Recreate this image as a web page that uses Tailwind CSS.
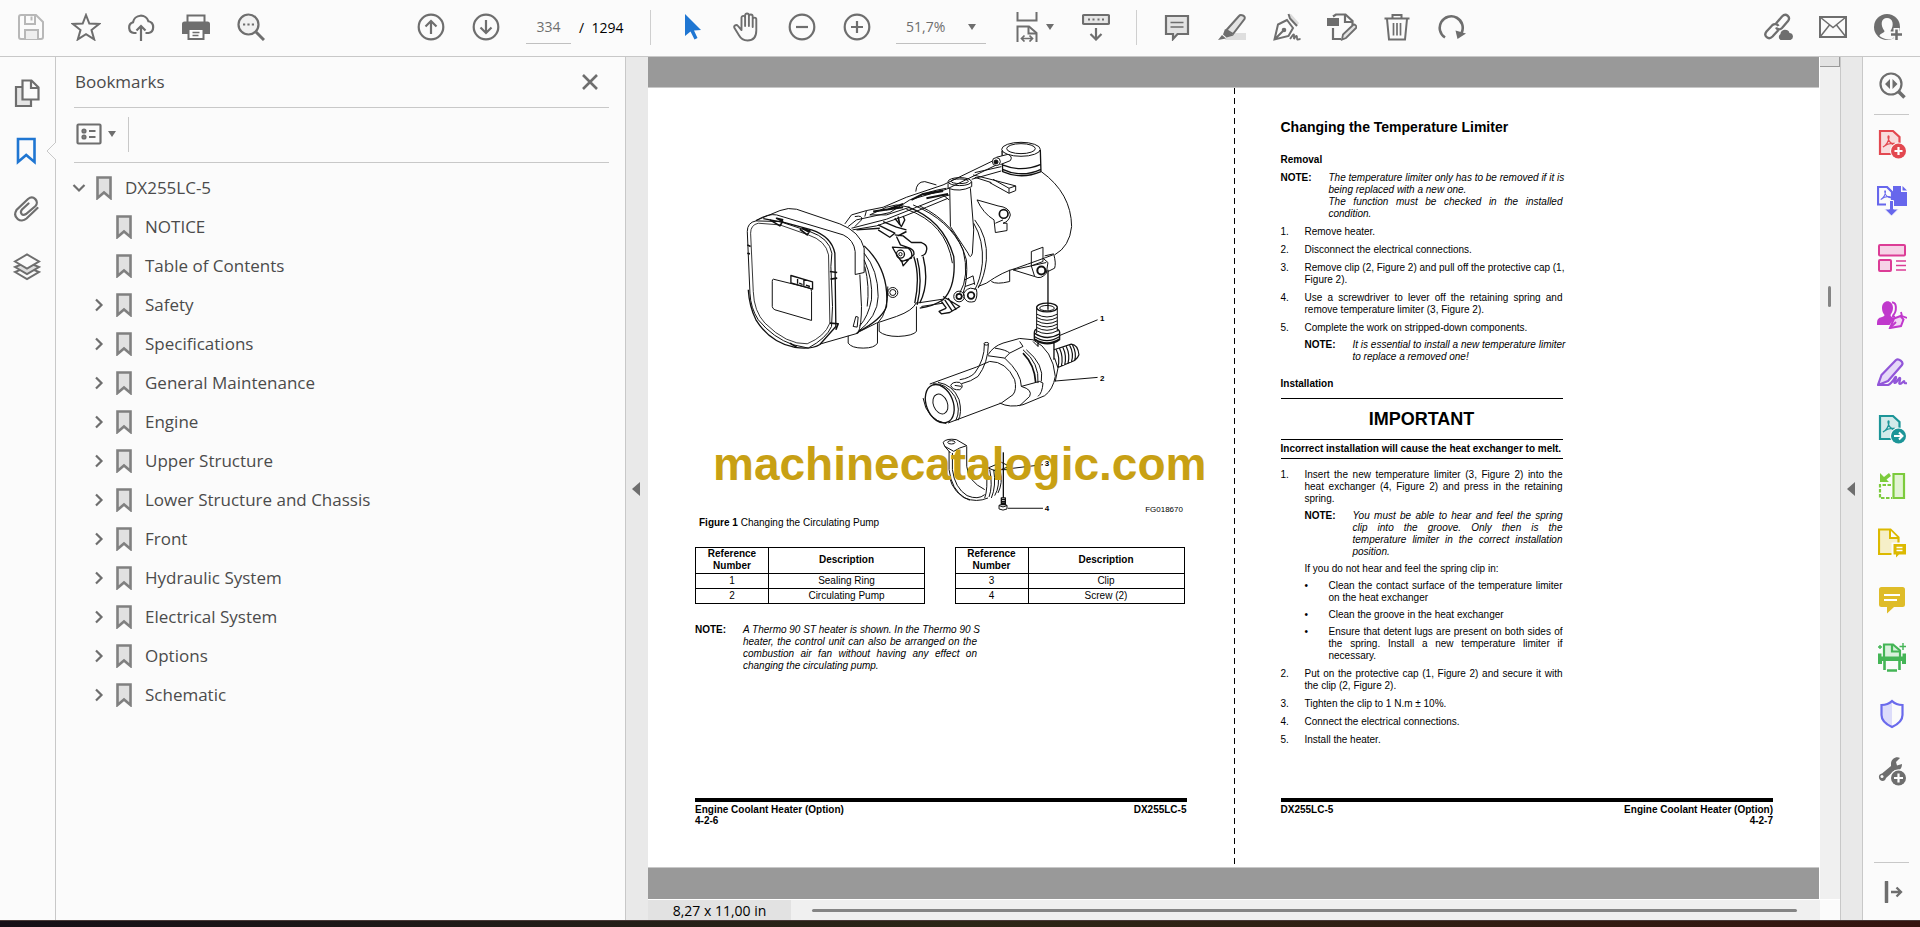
<!DOCTYPE html>
<html lang="en">
<head>
  <meta charset="UTF-8" />
  <meta name="viewport" content="width=device-width, initial-scale=1.0" />
  <title>DX255LC-5 - PDF Reader</title>
  <script src="https://cdn.jsdelivr.net/npm/@tailwindcss/browser@4"></script>
</head>
<body class="h-screen flex flex-col overflow-hidden bg-[#fbfbfb] text-[#4b4b4b] font-['Open_Sans','Noto_Sans',sans-serif]">

  <!-- Shared icons -->
  <svg class="hidden">
    <symbol id="bookmark" viewBox="0 0 16 24"><path d="M1.5 1.5h13v20.5L8 16.5 1.5 22z" fill="#e1e1e1" stroke="#808080" stroke-width="2.6" /></symbol>
    <symbol id="chevron" viewBox="0 0 10 14"><path d="M2 1.5 7.5 7 2 12.5" fill="none" stroke="#6e6e6e" stroke-width="2.2" /></symbol>
    <symbol id="caret" viewBox="0 0 8 6"><path d="M0 0h8L4 6z" fill="#6e6e6e" /></symbol>
    <symbol id="acrobat" viewBox="0 0 14 14"><path d="M1 12c3-1 6-6 6-10 0-1.500-1-1.500-1 0 0 4 4 8 7 8 1 0 1-1.500 0-1.500-4-.5-9 1-12 3.500z" fill="none" stroke="currentColor" stroke-width="1.300" /></symbol>
  </svg>

  <!-- Toolbar -->
  <header class="h-[57px] shrink-0 flex items-center border-b border-[#c8c8c8] pl-[3px] pr-[5px] pb-0.5 text-[#6e6e6e] [&_button]:w-[55px] [&_button]:h-10 [&_button]:flex [&_button]:items-center [&_button]:justify-center">
    <button aria-label="Save">
      <svg class="size-7" viewBox="0 0 28 28" fill="none" stroke="#b8b8b8" stroke-width="2"><path d="M4 2h15l7 7v15a2 2 0 0 1-2 2H4a2 2 0 0 1-2-2V4a2 2 0 0 1 2-2z" /><path d="M8 2v9h10V2" /><path d="M14.500 3.500v4" /><path d="M8 26v-9h13v9" fill="#eee" /></svg>
    </button>
    <button aria-label="Add to favourites">
      <svg class="w-[30px] h-7" viewBox="0 0 30 28" fill="none" stroke="currentColor" stroke-width="2"><path d="m15 2 3.300 8.600 9.700.4-7.500 6 2.700 9.400L15 21.200l-8.200 5.200L9.500 17 2 11l9.700-.4z" /></svg>
    </button>
    <button aria-label="Upload">
      <svg class="size-7" viewBox="0 0 28 28" fill="none" stroke="currentColor" stroke-width="2.200"><path d="M9.500 20H7A5.500 5.500 0 0 1 6 9.300a8 8 0 0 1 15.500-1A6 6 0 0 1 21.500 20h-3" /><path d="M14 28V13M9.500 17.500 14 13l4.500 4.500" /></svg>
    </button>
    <button aria-label="Print">
      <svg class="size-7" viewBox="0 0 28 28" fill="none"><path d="M5.500 9V2.500h17V9" stroke="currentColor" stroke-width="2" /><path d="M2.500 8.500h23A2.500 2.500 0 0 1 28 11v10h-6v-5H6v5H0V11a2.500 2.500 0 0 1 2.500-2.500z" fill="currentColor" /><path d="M6.500 16h15v10h-15z" fill="#fff" stroke="currentColor" stroke-width="2" /><path d="M10.500 19.500h7M10.500 22.500h6" stroke="currentColor" stroke-width="1.500" /></svg>
    </button>
    <button aria-label="Find">
      <svg class="size-7" viewBox="0 0 28 28" fill="none" stroke="currentColor" stroke-width="2.200"><circle cx="11.500" cy="11.500" r="10" fill="#f1f1f1" /><path d="m19 19 8 8" stroke-width="3" /><path d="M6 11.500h2.200M10.400 11.500h2.200M14.800 11.500H17" stroke-width="2.200" /></svg>
    </button>

    <button class="ml-[125px]" aria-label="Previous page">
      <svg class="size-7" viewBox="0 0 28 28" fill="none" stroke="currentColor" stroke-width="2.200"><circle cx="14" cy="14" r="12.300" /><path d="M14 21V8M8.500 13.500 14 8l5.500 5.500" /></svg>
    </button>
    <button aria-label="Next page">
      <svg class="size-7" viewBox="0 0 28 28" fill="none" stroke="currentColor" stroke-width="2.200"><circle cx="14" cy="14" r="12.300" /><path d="M14 7v13M8.500 14.500 14 20l5.500-5.500" /></svg>
    </button>
    <input id="page" aria-label="Page number" value="334" class="ml-[13px] w-[45px] h-[34px] border-b border-[#c0c0c0] text-center text-[14px] outline-none" />
    <label for="page" class="ml-2 w-[58px] text-[14px] text-black whitespace-pre">/  1294</label>
    <span class="ml-[13px] w-px h-[35px] bg-[#cfcfcf]"></span>

    <button class="ml-[13px]" aria-label="Select">
      <svg class="size-7" viewBox="0 0 28 28"><path d="M7 1v22l5.500-4.500 4 8 3-1.500-3.500-7.500 7-.5z" fill="#1f76d2" /></svg>
    </button>
    <button aria-label="Hand">
      <svg class="size-[30px]" viewBox="0 0 30 30" fill="none" stroke="currentColor" stroke-width="1.900" stroke-linejoin="round" stroke-linecap="round"><path d="M9.500 15.500V5.800c0-2.600 3.600-2.600 3.600 0V14 3.500c0-2.600 3.800-2.600 3.800 0V14 4.500c0-2.600 3.800-2.600 3.800 0V15 7.500c0-2.500 3.600-2.500 3.600 0v11c0 6-3 10-8.800 10-4.500 0-6.800-2-8.700-5.500L2.500 16c-1.200-2.400 1.800-4 3.500-2l3.500 4z" /></svg>
    </button>
    <button aria-label="Zoom out">
      <svg class="size-7" viewBox="0 0 28 28" fill="none" stroke="currentColor" stroke-width="2.200"><circle cx="14" cy="14" r="12.300" /><path d="M8 14h12" /></svg>
    </button>
    <button aria-label="Zoom in">
      <svg class="size-7" viewBox="0 0 28 28" fill="none" stroke="currentColor" stroke-width="2.200"><circle cx="14" cy="14" r="12.300" /><path d="M8 14h12M14 8v12" /></svg>
    </button>
    <div class="ml-3 w-[90px] h-[34px] flex items-center border-b border-[#c0c0c0]">
      <select aria-label="Zoom level" class="appearance-none grow h-full pl-2.5 text-[14px] outline-none"><option>51,7%</option></select>
      <svg class="w-2 h-1.5 mr-2.5"><use href="#caret" /></svg>
    </div>
    <button class="ml-[21px] gap-2" aria-label="Fit page">
      <svg class="w-[22px] h-[30px] shrink-0" viewBox="0 0 22 30" fill="none" stroke="currentColor" stroke-width="2"><path d="M1.500 0v8.500h19V0M1.500 30V14.500H13l7.500 6.500v9" /><path d="M12.500 15v6.500h8" /><path d="M6 26.500h10M8.500 23.500l-3 3 3 3M13.500 23.500l3 3-3 3" stroke-width="1.700" /></svg>
      <svg class="w-2 h-1.5 shrink-0"><use href="#caret" /></svg>
    </button>
    <button class="ml-1.5" aria-label="Scroll mode">
      <svg class="size-7" viewBox="0 0 28 28" fill="none" stroke="currentColor" stroke-width="2.200"><rect x="1" y="2" width="26" height="9" rx="1" fill="#e6e6e6" /><path d="M6 6.500h2M10.500 6.500h2M15.500 6.500h2M20 6.500h2" /><path d="M14 15v11M8.500 21l5.500 5.500 5.500-5.500" /></svg>
    </button>
    <span class="ml-[13px] w-px h-[35px] bg-[#cfcfcf]"></span>

    <button class="ml-3" aria-label="Comment">
      <svg class="size-7" viewBox="0 0 28 28" stroke="currentColor" stroke-width="2.200" fill="#e3e3e3"><path d="M3 3h22v18H14.500L10 26v-5H3z" /><path d="M7.500 9.500h13M7.500 14h13" stroke-width="1.600" /></svg>
    </button>
    <button aria-label="Highlight">
      <svg class="size-7" viewBox="0 0 28 28" stroke="currentColor" stroke-width="2"><path d="M9 20h19v7H7z" fill="#dedede" stroke="none" /><path d="M8.500 17 21 3c1.500-1.800 7-.5 5.500 3L15 21z" fill="#e3e3e3" /><path d="m7 16 8.500 6.500-7 2L5 21.500zM4 22l4 3.500L0 27z" fill="currentColor" stroke="none" /></svg>
    </button>
    <button aria-label="Sign">
      <svg class="size-7" viewBox="0 0 28 28" fill="none" stroke="currentColor" stroke-width="2"><path d="m15 2 3-1 8 9-2 3z" fill="#dcdcdc" stroke="none" /><path d="M15.500 1 17 5.500 24 13M14 7 5 11.500 1.500 26.500 15.500 23 20 15zM2 26l8.500-8.500" /><circle cx="11" cy="17" r="1.300" fill="currentColor" /><path d="M17 26c3-4 4-6 4-3.500V26c2-4 3-4 3-1s1 1 3.500 1" stroke-width="1.800" /></svg>
    </button>
    <button aria-label="Stamp">
      <svg class="w-[30px] h-7" viewBox="0 0 30 28" fill="none" stroke="currentColor" stroke-width="2.200"><path d="M6 3.500 9 1.500h9.500l7 6.500v4M6 15v11h8" /><path d="M18 2v7h7" /><path d="M0 5h12v8H0z" fill="currentColor" stroke="none" /><path d="m15 26.500 1-5 10-9.500c1.500-1.500 4.500 1.500 3 3L19 25z" fill="#e3e3e3" stroke-width="1.800" /></svg>
    </button>
    <button aria-label="Delete">
      <svg class="size-7" viewBox="0 0 28 28" fill="none" stroke="currentColor" stroke-width="2"><path d="M1.500 5.500h25M9.500 5V2h9v3M4 6l2 20.500h16L24 6" /><path d="M10.500 10v12.500M14 10v12.500M17.500 10v12.500" stroke-width="1.700" /></svg>
    </button>
    <button aria-label="Rotate">
      <svg class="size-7" viewBox="0 0 28 28" fill="none" stroke="currentColor" stroke-width="2.600"><path d="M7 24.500A11.500 11.500 0 1 1 23.500 20" /><path d="m17.500 17.500 10.500 3L19.500 26z" fill="currentColor" stroke="none" /></svg>
    </button>

    <button class="ml-auto" aria-label="Share link">
      <svg class="w-[30px] h-7" viewBox="0 0 30 28" fill="none" stroke="currentColor" stroke-width="2.300"><path d="m13 10.500 6-7c4-4 9 .5 6 4.500l-6 7c-2 2-5 1.500-6-.5" /><path d="m15.500 17-6 6.500c-4 4-9.500-.5-6-5l6-6.500c2-1.700 5-1 6 1" /><path d="M17.500 27a3.500 3.500 0 0 1 0-6c0-5 8-6 9-1a3.600 3.600 0 0 1 1 7z" fill="currentColor" stroke="none" /></svg>
    </button>
    <button aria-label="Send by mail">
      <svg class="size-7" viewBox="0 0 28 28" fill="none" stroke="currentColor" stroke-width="2"><path d="M1 4h26v20H1z" /><path d="m1 4 13 10.500L27 4M1 24l9.500-12M27 24l-9.500-12" stroke-width="1.500" /></svg>
    </button>
    <button aria-label="Account">
      <svg class="size-7" viewBox="0 0 28 28" fill="none"><circle cx="13" cy="14" r="13" fill="currentColor" /><path d="M5.500 23c.5-3 5-3 5-5C6 12 7 5 13 5s7.500 7 3.500 13c0 1.500 2 2 4 3l-2 5c-5 1-9 0-13-3z" fill="#fbfbfb" /><path d="M22.500 15v13M16 21.500h12" stroke="#fbfbfb" stroke-width="6" /><path d="M22.500 16.500v10.500M17 21.500h11" stroke="currentColor" stroke-width="2.500" /></svg>
    </button>
  </header>

  <div class="flex grow min-h-0">

    <!-- Panel switcher -->
    <nav class="relative w-14 shrink-0 flex flex-col items-center gap-[30px] border-r border-[#c8c8c8] pt-[22px] pr-0.5 text-[#6e6e6e]">
      <button aria-label="Page thumbnails">
        <svg class="size-7" viewBox="0 0 28 28" fill="none" stroke="currentColor" stroke-width="2.200"><path d="M9 8H3v19h15v-6" fill="#e6e6e6" /><path d="M9.500 1.500h9l7 7v12h-16z" fill="#fbfbfb" /><path d="M18 2v7h7" /></svg>
      </button>
      <button aria-label="Bookmarks">
        <svg class="size-7" viewBox="0 0 28 28" fill="none" stroke="#1f76d2" stroke-width="2.600"><path d="M5 2h16.500v23L13.200 18 5 25z" /></svg>
      </button>
      <button aria-label="Attachments">
        <svg class="size-7" viewBox="0 0 28 28" fill="none" stroke="currentColor" stroke-width="2.200" stroke-linecap="round"><path d="M24.500 13 13.500 23.500C8 28.500-1 23 3.500 15L15 4c5.500-4.500 11.500 2.500 7.500 7L13 19c-4 2.500-6.500-1.500-4-4.500l6.500-6" /></svg>
      </button>
      <button aria-label="Layers">
        <svg class="size-7" viewBox="0 0 28 28" fill="#fbfbfb" stroke="currentColor" stroke-width="2"><path d="m2 19 12 7 12-7-12-5z" /><path d="m2 14 12 7 12-7-12-5z" fill="#dedede" /><path d="m2 8.500 12 7 12-7-12-7z" /></svg>
      </button>
      <svg class="absolute -right-px top-[85px] w-[10px] h-[18px]" viewBox="0 0 10 18"><path d="M10 0 1 9l9 9" fill="#fbfbfb" stroke="#c8c8c8" /></svg>
    </nav>

    <!-- Bookmarks panel -->
    <aside class="w-[570px] shrink-0 border-r border-[#c8c8c8] pl-[18px] pr-4">
      <div class="flex items-center justify-between h-[51px] border-b border-[#c8c8c8] pl-px pr-2.5">
        <h2 class="text-[17px]">Bookmarks</h2>
        <button aria-label="Close panel">
          <svg class="size-[18px]" viewBox="0 0 18 18"><path d="m2 2 14 14M16 2 2 16" stroke="#6e6e6e" stroke-width="2.600" /></svg>
        </button>
      </div>
      <div class="flex items-center h-[55px] border-b border-[#c8c8c8] pl-0.5 pb-0.5 mb-[5px]">
        <button class="flex items-center gap-1.5" aria-label="Bookmark options">
          <svg class="w-[26px] h-[22px]" viewBox="0 0 26 22" fill="none" stroke="#6e6e6e" stroke-width="2.200"><rect x="1.500" y="1.500" width="23" height="19" rx="1" /><circle cx="8" cy="8" r="1.500" /><circle cx="8" cy="14" r="1.500" /><path d="M13 8h6.500M13 14h6.500" /></svg>
          <svg class="w-2 h-1.5"><use href="#caret" /></svg>
        </button>
        <span class="ml-3 w-px h-[35px] bg-[#c8c8c8]"></span>
      </div>
      <ul id="bookmarks"></ul>
    </aside>

    <button class="w-[22px] shrink-0 flex items-center justify-center bg-[#e9e9e9] pr-0.5" aria-label="Collapse bookmarks">
      <svg class="w-2 h-3.5" viewBox="0 0 8 14"><path d="M8 0v14L0 7z" fill="#6e6e6e" /></svg>
    </button>

    <!-- Document -->
    <main class="grow min-w-0 flex flex-col">
      <div class="grow flex min-h-0">
        <div class="grow min-w-0 flex flex-col bg-[#999]">
          <div class="h-[30px] shrink-0"></div>
          <div class="grow grid grid-cols-2 border-y border-[#c8c8c8] bg-white font-['Liberation_Sans',sans-serif] text-[10px] leading-3 text-black">

            <!-- Left page -->
            <article class="relative flex flex-col px-[47px] pt-8 pb-[41px]">
              <svg class="w-full" viewBox="-105 0 1476 1188" fill="none" stroke="#111" stroke-width="3" stroke-linejoin="round">
                <!-- Front cover -->
                <path d="M52 335Q52 308 78 303L150 305 240 335Q298 355 306 400L303 440 308 560 305 620Q290 655 235 685L190 675Q130 655 85 600 62 565 60 520z" />
                <path d="M62 340Q62 315 85 310L150 315 235 345Q288 362 296 405L300 610Q285 650 232 672 170 675 105 610 72 575 70 515z" stroke-width="2.500" />
                <path d="M78 302 150 272Q175 262 200 268L330 312Q390 335 403 385V458L376 464V395Q372 360 340 345L140 285Q115 280 78 302" />
                <path d="M100 296 165 308 245 330Q305 350 315 400L318 620 270 674Q245 690 195 683 120 668 78 600 58 560 55 510" stroke-width="4" />
                <path d="M390 464 395 560Q395 615 385 640L270 673M378 590 370 620 382 622 385 592z" />
                <path d="M120 300 150 318 158 305 140 295 160 300M210 328 232 345 240 333 218 325 238 337M300 455 322 458M302 478 322 475M300 610 325 612 318 630M52 375 62 380M52 400 60 402M180 670 200 682" stroke-width="5" />
                <path d="M130 478 240 505Q245 508 245 515V602L135 570Q127 566 127 560V485Q127 478 130 478z" />
                <path d="M183 467 248 486V508L183 489zM203 472v20M222 478v20M208 490l10 4M228 496l12 4" stroke-width="4" />
                <!-- Bellow rings behind the cover -->
                <path d="M403 378Q480 450 470 560 455 600 385 636" stroke-width="4" />
                <path d="M403 400Q445 450 445 530 445 590 380 640M403 420Q430 480 425 540 415 590 390 618M405 440Q420 500 412 560" />
                <path d="M474 500Q475 580 445 608M380 640 440 610 500 590Q550 572 560 548" />
                <path d="M355 648V670Q365 685 400 685 435 685 443 670V610M448 610V635Q465 650 505 650 550 648 560 635V560" />
                <circle cx="489" cy="518" r="15" /><circle cx="489" cy="518" r="9" />
                <!-- Hoses along the top -->
                <path d="M345 312 365 285 410 272 460 262 530 232 640 195 795 120M355 320 380 300 480 278 540 240 650 208 800 135M365 325 470 298 560 262 640 230 660 225" />
                <path d="M368 330 440 318 520 290 590 262 655 235M375 290Q400 285 395 300L375 320M410 272 405 290M420 285 470 262 500 255 540 262 470 285zM560 232Q590 215 650 205M558 215Q560 185 585 185L620 195M580 225 640 215" />
                <path d="M430 275 520 262M545 240 580 222 640 212M470 270 520 252M590 235 655 222" stroke-width="6" />
                <!-- Sensor bracket -->
                <path d="M445 315 495 340 480 352 445 330M460 305 500 322 530 330M495 295 515 320 525 300 520 288M495 345 520 348 545 368 575 368Q595 375 590 392 588 405 575 408M500 350 512 375 540 385Q555 392 552 405L540 415 520 438 515 420M488 382 535 385Q550 395 545 415L515 425Q500 405 488 382z" stroke-width="4" />
                <path d="M505 290 510 315M530 335 505 348" stroke-width="5" />
                <circle cx="512" cy="403" r="12" stroke-width="4" /><circle cx="512" cy="403" r="5" />
                <path d="M380 330 450 325M552 410Q572 470 555 550M580 410Q600 490 570 550M562 415Q580 480 562 555" stroke-width="4" />
                <!-- Clamp band -->
                <path d="M535 262Q640 300 672 410 680 500 640 540 610 560 570 565" stroke-width="4" />
                <path d="M550 255Q660 300 700 390 720 470 690 520M570 258Q680 310 710 420 715 480 700 520M560 550 640 538M575 560 640 550M530 268Q650 310 668 430" />
                <path d="M640 530 690 560 660 578 635 582 628 575 650 565M645 540 668 575M655 535 680 570M635 545 650 565" stroke-width="4" />
                <circle cx="688" cy="530" r="16" /><circle cx="688" cy="530" r="8" stroke-width="5" />
                <path d="M700 530Q702 510 722 505L740 508Q745 530 735 545 715 550 708 540z" /><circle cx="724" cy="527" r="10" stroke-width="5" />
                <!-- Upright pipe -->
                <path d="M655 190V205Q690 218 726 200V185" /><ellipse cx="690" cy="185" rx="35" ry="12" /><ellipse cx="690" cy="184" rx="26" ry="7" />
                <path d="M660 207 662 320 715 400Q722 420 728 400L732 330 722 205M640 225 658 240" />
                <path d="M735 300Q775 350 770 420 765 470 745 505M732 310Q762 360 758 430 752 480 735 510M705 480 730 468 735 495M706 500 735 490" />
                <!-- Rear body -->
                <path d="M726 178 815 153M735 158 815 140M935 155Q1025 220 1026 320 1020 380 975 405M970 405Q930 420 860 445 820 455 770 490L745 500M785 485Q800 495 840 485V450" />
                <path d="M730 165 790 180 858 198V212L838 220 780 188M838 205 858 198M838 205V220M735 172 785 188M790 178 838 205" />
                <path d="M742 240 805 258Q840 262 842 285 838 305 820 310L832 310V332L797 338 793 300Q760 280 742 240zM797 310 820 300" /><circle cx="822" cy="282" r="13" stroke-width="5" />
                <path d="M905 395 940 382V425L905 438 850 450 915 470M905 395V438M940 415 955 428 950 460Q935 480 915 470L905 438 950 428M945 408 972 402Q980 430 975 445L955 455" /><circle cx="935" cy="452" r="12" stroke-width="6" />
                <!-- Filler cap -->
                <ellipse cx="874" cy="88" rx="58" ry="21" /><ellipse cx="874" cy="86" rx="43" ry="15" />
                <path d="M817 92 819 155Q875 180 934 155L932 90M818 135Q875 158 934 133M819 148Q875 175 934 148" stroke-width="4" />
                <path d="M800 112 835 103Q850 110 842 122L812 134" fill="#fff" /><circle cx="800" cy="125" r="12" fill="#fff" /><circle cx="799" cy="126" r="6" fill="#111" />
                <!-- Sealing ring and spigot -->
                <path d="M955 450V570" stroke-width="4" />
                <ellipse cx="952" cy="563" rx="31" ry="13" stroke-width="4" /><ellipse cx="952" cy="565" rx="22" ry="8" />
                <path d="M921 565V640M983 565V635M921 583Q952 600 983 583M921 593Q952 610 983 593M921 603Q952 620 983 603M921 613Q952 630 983 613M921 623Q952 640 983 623M921 633Q952 650 983 633" />
                <path d="M914 640Q914 630 921 628M983 628Q992 632 990 645V660Q955 685 914 660V640Q952 665 990 642M914 650Q952 675 990 650M916 658Q952 682 990 657M925 668V680M973 670V720" stroke-width="4" />
                <!-- Outlet -->
                <path d="M973 690 1025 673Q1045 675 1048 705 1045 715 1035 722L985 743M980 690Q992 715 985 742M990 686Q1002 712 995 740M1000 683Q1012 708 1005 736M1010 680Q1022 705 1015 732M1020 676Q1034 702 1025 728M1028 674Q1042 700 1035 722" stroke-width="3.500" />
                <!-- Pump body -->
                <ellipse cx="630" cy="852" rx="40" ry="60" transform="rotate(-22 630 852)" stroke-width="4" />
                <ellipse cx="632" cy="853" rx="21" ry="31" transform="rotate(-22 632 853)" />
                <path d="M610 792Q650 790 675 830 695 870 678 903M625 788Q670 795 688 840 698 880 685 902M600 793 740 742 780 725M655 910 815 850M580 835Q590 900 650 912" />
                <path d="M775 705Q790 680 820 670L870 656 910 660Q970 690 977 770 970 810 945 828L880 855Q840 865 810 850M780 725Q830 725 855 780 862 810 850 825L815 850M795 685Q830 690 840 700L825 715 775 708M840 700 880 680 870 665M825 715Q875 760 875 800L930 785 940 790Q938 820 925 830M875 800Q910 810 900 830L870 858M880 690Q930 730 925 790M890 690Q945 735 935 785M910 665 925 680" />
                <path d="M880 700Q915 735 918 788" stroke-width="5" />
                <path d="M975 715 985 745 977 785" />
                <!-- Cable -->
                <path d="M764 672Q765 720 735 760 720 775 690 780M776 674Q775 730 745 770 725 785 695 792M663 797Q668 785 690 788 705 800 690 810 668 812 663 797zM675 797 695 800" /><ellipse cx="770" cy="672" rx="7" ry="4" />
                <!-- Clip -->
                <path d="M640 968Q650 955 680 960L711 978 690 985 672 995 645 980zM645 980 662 1000" /><ellipse cx="665" cy="968" rx="11" ry="5" />
                <path d="M658 995V1050Q665 1110 705 1135 740 1150 775 1135M668 1000V1050Q675 1105 712 1128 745 1142 765 1125M711 980V1040Q715 1085 765 1110M658 1070Q672 1125 720 1142M765 1135Q775 1110 770 1050M785 1135Q800 1100 792 1050M778 1132Q790 1100 780 1050M795 1128Q812 1100 804 1055M805 1120Q820 1090 812 1055" />
                <path d="M775 1045 815 1028 840 1040 800 1055zM795 1050 832 1050" />
                <path d="M821 998V1135" stroke-width="4" />
                <!-- Screw -->
                <path d="M815 1135h12v20h-12zM815 1140h12M815 1146h12M815 1151h12" stroke-width="4" /><path d="M808 1157Q820 1150 832 1157V1168Q820 1175 808 1168zM808 1158Q820 1166 832 1158" />
                <!-- Leaders -->
                <path d="M988 648 1104 600M975 784 1104 773M832 1048 940 1035M835 1166H940" />
                <g fill="#000" stroke="none" class="font-['Liberation_Sans',sans-serif] text-[24px]">
                  <g class="font-bold"><text x="1111" y="603">1</text><text x="1111" y="783">2</text><text x="945" y="1040">3</text><text x="945" y="1175">4</text></g>
                  <text x="1247" y="1178">FG018670</text>
                </g>
              </svg>
              <p class="mt-px pl-1"><b>Figure 1</b> Changing the Circulating Pump</p>

              <div class="mt-[18px] flex justify-between pr-0.5 [&_td]:border [&_th]:border [&_td]:border-black [&_th]:border-black [&_td]:h-[15px] [&_th]:h-[26px]">
                <table class="w-[230px] border-collapse text-center">
                  <tr><th class="w-[73px]">Reference<br>Number</th><th>Description</th></tr>
                  <tr><td>1</td><td>Sealing Ring</td></tr>
                  <tr><td>2</td><td>Circulating Pump</td></tr>
                </table>
                <table class="w-[230px] border-collapse text-center">
                  <tr><th class="w-[73px]">Reference<br>Number</th><th>Description</th></tr>
                  <tr><td>3</td><td>Clip</td></tr>
                  <tr><td>4</td><td>Screw (2)</td></tr>
                </table>
              </div>

              <div class="mt-5 flex">
                <b class="w-12 shrink-0">NOTE:</b>
                <p class="w-[234px] italic text-justify"><span class="whitespace-nowrap">A Thermo 90 ST heater is shown. In the Thermo 90 S</span> heater, the control unit can also be arranged on the combustion air fan without having any effect on changing the circulating pump.</p>
              </div>

              <footer class="mt-auto border-t-4 border-black pt-0.5 font-bold leading-[11px]">
                <p class="flex justify-between"><span>Engine Coolant Heater (Option)</span><span>DX255LC-5</span></p>
                <p>4-2-6</p>
              </footer>
              <p class="absolute z-10 left-[65px] top-[352px] text-[46px] leading-[48px] font-bold whitespace-nowrap text-[#c8a014]">machinecatalogic.com</p>
            </article>

            <!-- Right page -->
            <article class="relative flex flex-col pl-[47px] pr-[46px] pt-[31px] pb-[41px]">
              <span class="absolute left-0 inset-y-0 w-px bg-[repeating-linear-gradient(#000_0_6px,transparent_6px_10px)]"></span>
              <div class="w-[282px]">
                <h1 class="text-[14px] leading-4 font-bold whitespace-nowrap">Changing the Temperature Limiter</h1>
                <h2 class="mt-[19px] font-bold">Removal</h2>
                <div class="mt-1.5 flex">
                  <b class="w-12 shrink-0">NOTE:</b>
                  <p class="w-[234px] italic text-justify"><span class="whitespace-nowrap">The temperature limiter only has to be removed if it is</span> being replaced with a new one.<br>The function must be checked in the installed condition.</p>
                </div>
                <ol class="mt-1.5 space-y-1.5 text-justify [&>li]:flex">
                  <li><span class="w-6 shrink-0">1.</span><p>Remove heater.</p></li>
                  <li><span class="w-6 shrink-0">2.</span><p>Disconnect the electrical connections.</p></li>
                  <li><span class="w-6 shrink-0">3.</span><p class="w-[258px]"><span class="whitespace-nowrap">Remove clip (2, Figure 2) and pull off the protective cap (1,</span> Figure 2).</p></li>
                  <li><span class="w-6 shrink-0">4.</span><p>Use a screwdriver to lever off the retaining spring and remove temperature limiter (3, Figure 2).</p></li>
                  <li><span class="w-6 shrink-0">5.</span>
                    <div class="space-y-[5px]">
                      <p>Complete the work on stripped-down components.</p>
                      <div class="flex"><b class="w-12 shrink-0">NOTE:</b><p class="w-[210px] italic"><span class="whitespace-nowrap">It is essential to install a new temperature limiter</span> to replace a removed one!</p></div>
                    </div>
                  </li>
                </ol>
                <h2 class="mt-[15px] font-bold">Installation</h2>
                <div class="mt-2 border-y border-black text-center text-[18px] leading-5 font-bold py-[10px]">IMPORTANT</div>
                <p class="border-b border-black py-[3px] font-bold whitespace-nowrap">Incorrect installation will cause the heat exchanger to melt.</p>
                <ol class="mt-2.5 space-y-1.5 text-justify [&>li]:flex">
                  <li><span class="w-6 shrink-0">1.</span>
                    <div class="space-y-[5px]">
                      <p>Insert the new temperature limiter (3, Figure 2) into the heat exchanger (4, Figure 2) and press in the retaining spring.</p>
                      <div class="flex"><b class="w-12 shrink-0">NOTE:</b><p class="italic">You must be able to hear and feel the spring clip into the groove. Only then is the temperature limiter in the correct installation position.</p></div>
                      <p>If you do not hear and feel the spring clip in:</p>
                      <ul class="space-y-[5px] [&>li]:flex">
                        <li><span class="w-6 shrink-0">•</span><p>Clean the contact surface of the temperature limiter on the heat exchanger</p></li>
                        <li><span class="w-6 shrink-0">•</span><p>Clean the groove in the heat exchanger</p></li>
                        <li><span class="w-6 shrink-0">•</span><p>Ensure that detent lugs are present on both sides of the spring. Install a new temperature limiter if necessary.</p></li>
                      </ul>
                    </div>
                  </li>
                  <li><span class="w-6 shrink-0">2.</span><p>Put on the protective cap (1, Figure 2) and secure it with the clip (2, Figure 2).</p></li>
                  <li><span class="w-6 shrink-0">3.</span><p>Tighten the clip to 1 N.m ± 10%.</p></li>
                  <li><span class="w-6 shrink-0">4.</span><p>Connect the electrical connections.</p></li>
                  <li><span class="w-6 shrink-0">5.</span><p>Install the heater.</p></li>
                </ol>
              </div>
              <footer class="mt-auto border-t-4 border-black pt-0.5 font-bold leading-[11px]">
                <p class="flex justify-between"><span>DX255LC-5</span><span>Engine Coolant Heater (Option)</span></p>
                <p class="text-right">4-2-7</p>
              </footer>
            </article>
          </div>
          <div class="h-[31px] shrink-0"></div>
        </div>
        <!-- Vertical scrollbar -->
        <div class="w-[21px] shrink-0 flex flex-col items-center bg-[#f0f0f0] border-l border-white">
          <span class="w-full h-2.5 bg-[#e3e3e3] border-b border-r border-[#9a9a9a]"></span>
          <span class="mt-[219px] mr-0.5 w-[3px] h-[21px] rounded bg-[#858585]"></span>
        </div>
      </div>
      <!-- Status bar -->
      <div class="h-[21px] shrink-0 flex items-center bg-[#f0f0f0] border-t border-white text-black">
        <span class="w-[143px] h-full bg-[#e2e2e2] text-center text-[14px] leading-[22px]">8,27 x 11,00 in</span>
        <span class="grow ml-[21px] mr-[23px] h-[3px] rounded bg-[#858585]"></span>
        <span class="w-5 h-full bg-[#fbfbfb]"></span>
      </div>
    </main>

    <button class="w-[23px] shrink-0 flex items-center justify-center bg-[#e9e9e9] border-x border-[#c8c8c8] pr-0.5" aria-label="Collapse tools">
      <svg class="w-2 h-3.5" viewBox="0 0 8 14"><path d="M8 0v14L0 7z" fill="#6e6e6e" /></svg>
    </button>

    <!-- Tools -->
    <nav class="w-[57px] shrink-0 flex flex-col items-center text-[#6e6e6e] [&>button]:h-[57px] [&>button]:shrink-0 [&_svg]:block">
      <button aria-label="Search tools">
        <svg class="size-7" viewBox="0 0 28 28" fill="none" stroke="currentColor" stroke-width="2.200"><circle cx="13" cy="12" r="10.500" /><path d="m20 19 6.500 6.500" stroke-width="3.500" /><path d="M12 7v10l-5-5zM14.500 7v10l5-5z" fill="currentColor" stroke="none" /></svg>
      </button>
      <span class="w-[35px] h-px bg-[#c8c8c8]"></span>
      <button class="text-[#e34850]" aria-label="Create PDF">
        <svg class="w-7 h-[30px]" viewBox="0 0 28 30"><path d="M2 2h13l6.500 6v17H2z" fill="#f8dcdd" stroke="currentColor" stroke-width="2.200" /><use href="#acrobat" x="4" y="6" width="14" height="14" /><circle cx="20.500" cy="22" r="8.500" fill="#fbfbfb" /><circle cx="20.500" cy="22" r="7.500" fill="currentColor" /><path d="M20.500 18v8M16.500 22h8" stroke="#fff" stroke-width="2.200" /></svg>
      </button>
      <button class="text-[#6767ec]" aria-label="Export PDF">
        <svg class="w-[30px] h-[30px]" viewBox="0 0 30 30"><path d="M16 0h8v6h6v14H16z" fill="currentColor" /><path d="M25.500 0 30 4.500h-4.500z" fill="currentColor" /><path d="M9 18.500H1V1h9l5 5v9" fill="#fbfbfb" stroke="currentColor" stroke-width="2.200" /><use href="#acrobat" x="3" y="4" width="11" height="11" /><path d="M12.500 14.500h4V23h5L14.500 30 7.500 23h5z" fill="currentColor" stroke="#fbfbfb" stroke-width="1" /></svg>
      </button>
      <button class="text-[#dc3c96]" aria-label="Organize pages">
        <svg class="size-7" viewBox="0 0 28 28" fill="#f6d3e7" stroke="currentColor" stroke-width="2"><rect x="1" y="1" width="26" height="10.500" rx="1" /><rect x="1" y="16" width="12" height="11" rx="1" /><path d="M18 17h10M18 21.500h10M18 26h10" stroke-width="1.400" /></svg>
      </button>
      <button class="text-[#c038cc]" aria-label="Send for signature">
        <svg class="w-[30px] h-7" viewBox="0 0 30 28"><path d="M5 7c0-9 11-9 11 0 0 3-1.500 5-2.500 7 0 2 2 2 4 3l-5 7H0c0-6 1-7 5-8 2-1 2.500-1 2.500-2C6 12 5 10 5 7z" fill="currentColor" /><path d="M15 1.500c5-1 5 9 1 13M15 15l3 1" fill="none" stroke="currentColor" stroke-width="2" /><path d="m13 27 4-9.500 6.500-2.500 3 3.500L24 25z" fill="#f3d6f5" stroke="currentColor" stroke-width="2" /><path d="m24 11 1 4 5 2M13 27l6-6" fill="none" stroke="currentColor" stroke-width="1.800" /></svg>
      </button>
      <button class="text-[#9256d9]" aria-label="Edit and sign">
        <svg class="w-[30px] h-7" viewBox="0 0 30 28" fill="none" stroke="currentColor" stroke-width="2.200" stroke-linejoin="round"><path d="m1 27 3.500-10L19 2c2.500-2 8 2 6 5L11 23z" fill="#e6d9f8" /><path d="M1 27h10c5-2 7-9 8-8s-3 6-1 6 4-6 5-5-2 6 0 6 3-3 4-3-1 3 3 2" /></svg>
      </button>
      <button class="text-[#1c9598]" aria-label="Share PDF">
        <svg class="w-7 h-[30px]" viewBox="0 0 28 30"><path d="M2 2h13l6.500 6v17H2z" fill="#d2eaea" stroke="currentColor" stroke-width="2.200" /><use href="#acrobat" x="4" y="6" width="14" height="14" /><circle cx="20.500" cy="22" r="8.500" fill="#fbfbfb" /><circle cx="20.500" cy="22" r="7.500" fill="currentColor" /><path d="M16 22h8M21 18.500l3.500 3.500-3.500 3.500" fill="none" stroke="#fff" stroke-width="2" /></svg>
      </button>
      <button class="text-[#7ccb3c]" aria-label="Compress PDF">
        <svg class="size-7" viewBox="0 0 28 28" fill="none" stroke="currentColor" stroke-width="2.200"><path d="M15.500 2h10.500v24H15.500z" fill="#e2f4d3" /><path d="M13 13H2v13h12" stroke-dasharray="3.500 1.500" /><path d="M2 1v9h9L8.500 7.500 13 4l-2-3-5 4z" fill="currentColor" stroke="none" /></svg>
      </button>
      <button class="text-[#dcb900]" aria-label="Comment on file">
        <svg class="w-7 h-[30px]" viewBox="0 0 28 30"><path d="M1 1.500h11.500l8 8V26H1z" fill="#f6efc8" stroke="currentColor" stroke-width="2.200" /><path d="M12 2v8h8" fill="#fbfbfb" stroke="currentColor" stroke-width="2" /><path d="M13.500 14.500H28V28h-8l-4 3v-3h-2.500z" fill="#fbfbfb" /><path d="M15.500 16H28v10.500h-7L18 29.500v-3h-2.500z" fill="currentColor" /><path d="M18.500 19.500h6M18.500 22.500h6" stroke="#fff" stroke-width="1.500" /></svg>
      </button>
      <button class="text-[#dfbc28]" aria-label="Comment">
        <svg class="size-7" viewBox="0 0 28 28"><path d="M3.500 1h21A2.500 2.500 0 0 1 27 3.500v15a2.500 2.500 0 0 1-2.500 2.500H16l-7 6.500V21H3.500A2.500 2.500 0 0 1 1 18.500v-15A2.500 2.500 0 0 1 3.500 1z" fill="currentColor" /><path d="M6 9h16M6 14h13" stroke="#fff" stroke-width="2" /></svg>
      </button>
      <button class="text-[#44b556]" aria-label="Scan">
        <svg class="w-7 h-[30px]" viewBox="0 0 28 30" fill="none" stroke="currentColor" stroke-width="2.200"><path d="M6 15V2.500h9l7 6V15" fill="#d8f0dc" /><path d="M14 3v6.500h7" /><path d="M0 11.500h3.500v3h21v-3H28V22h-4v-3H4v3H0z" fill="currentColor" stroke="none" /><path d="M6.500 19v9M21.500 19v9M9 28.500h10" stroke-width="2.600" /><path d="M25 1v7M21.500 4.500h7M2 3v4M0 5h4" stroke-width="1.400" /></svg>
      </button>
      <button class="text-[#6a6aec]" aria-label="Protect">
        <svg class="w-7 h-[30px]" viewBox="0 0 28 30"><path d="M14 2.500C11 5 7.500 6 3.500 6v10c0 6 5 9 10.500 12z" fill="#dcdcfa" /><path d="M14 2C11 5 7.500 6 3.500 6v10c0 6 5 9.500 10.500 12 5.500-2.500 10.500-6 10.500-12V6C20.500 6 17 5 14 2z" fill="none" stroke="currentColor" stroke-width="2.200" /></svg>
      </button>
      <button aria-label="More tools">
        <svg class="w-7 h-[30px]" viewBox="0 0 28 30"><path d="M13 8c0-6 6-8 9-6l-4 4 1 3.500 5-1.500c0 6-4 7-7 6L8 22c-1 5-8 3-7-2 .5-2 2-2 3-2.500L13 10z" fill="currentColor" /><circle cx="4" cy="20.500" r="1.500" fill="#fbfbfb" /><circle cx="20.500" cy="22" r="8.700" fill="#fbfbfb" /><circle cx="20.500" cy="22" r="7.500" fill="currentColor" /><path d="M20.500 17.500v9M16 22h9" stroke="#fff" stroke-width="2.200" /></svg>
      </button>
      <span class="mt-auto w-[35px] h-px shrink-0 bg-[#c8c8c8]"></span>
      <button aria-label="Hide tools">
        <svg class="w-5 h-[22px] ml-1" viewBox="0 0 20 22" fill="none" stroke="currentColor"><path d="M2.500 1v20" stroke-width="3.500" stroke-linecap="round" /><path d="M7 11h10M12.500 6.500 17 11l-4.500 4.500" stroke-width="2.300" /></svg>
      </button>
    </nav>
  </div>

  <!-- Edge of the desktop -->
  <div class="h-[7px] shrink-0 border-t border-[#4a3a38] bg-linear-to-r from-[#150f16] via-[#2c2616] to-[#34140f]"></div>

  <script>
    const bookmarks = [
      { title: 'NOTICE' },
      { title: 'Table of Contents' },
      { title: 'Safety', children: true },
      { title: 'Specifications', children: true },
      { title: 'General Maintenance', children: true },
      { title: 'Engine', children: true },
      { title: 'Upper Structure', children: true },
      { title: 'Lower Structure and Chassis', children: true },
      { title: 'Front', children: true },
      { title: 'Hydraulic System', children: true },
      { title: 'Electrical System', children: true },
      { title: 'Options', children: true },
      { title: 'Schematic', children: true },
    ];

    function renderBookmarks() {
      const list = document.getElementById('bookmarks');
      const root = `
        <li class="h-[39px] flex items-center">
          <button class="w-[22px]" aria-label="Collapse"><svg class="w-2.5 h-3.5 rotate-90"><use href="#chevron" /></svg></button>
          <svg class="w-4 h-6"><use href="#bookmark" /></svg>
          <a href="#" class="ml-[13px] text-[17px]">DX255LC-5</a>
        </li>`;
      list.innerHTML = root + bookmarks.map(item => `
        <li class="h-[39px] flex items-center pl-5">
          <button class="w-[22px] h-6 flex items-center" aria-label="Expand">${item.children ? '<svg class="w-2.5 h-3.5"><use href="#chevron" /></svg>' : ''}</button>
          <svg class="w-4 h-6"><use href="#bookmark" /></svg>
          <a href="#" class="ml-[13px] text-[17px]">${item.title}</a>
        </li>`).join('');
    }

    renderBookmarks();
  </script>
</body>
</html>
